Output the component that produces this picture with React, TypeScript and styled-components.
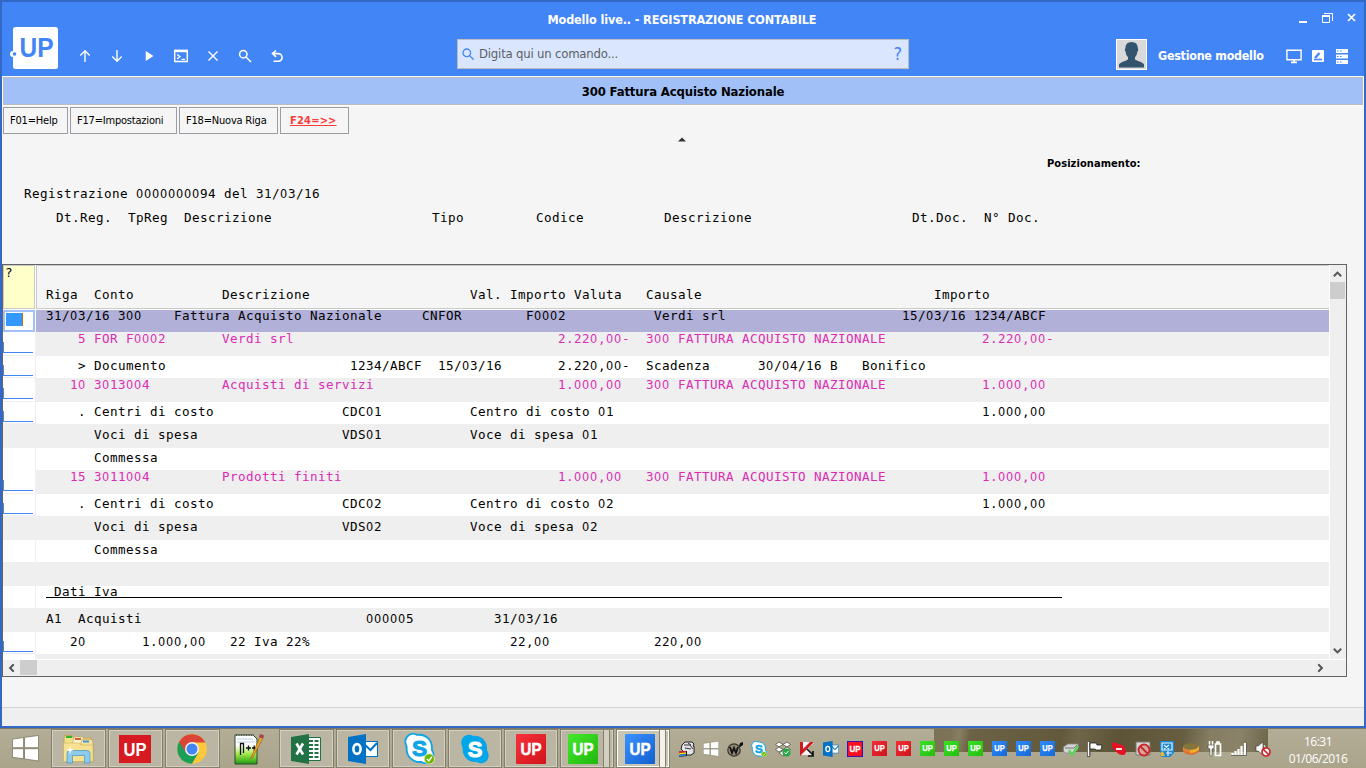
import React from 'react';
import styled, { createGlobalStyle } from 'styled-components';

const UI = `'DejaVu Sans Condensed', 'DejaVu Sans', sans-serif`;

const GlobalStyle = createGlobalStyle`
  * { box-sizing: border-box; }
  body { margin: 0; overflow: hidden; background: #b1ab92; font-family: ${UI}; }
  svg { display: block; }
`;

const Screen = styled.div`
  width: 1366px;
  height: 768px;
  display: flex;
  flex-direction: column;
`;

const Window = styled.main`
  height: 728px;
  border: 2px solid #3368c5;
  background: #f5f5f5;
  display: flex;
  flex-direction: column;
`;

/* ---------- header ---------- */

const Header = styled.header`
  height: 74px;
  flex: none;
  background: #4285f6;
  color: #fff;
`;

const TitleRow = styled.div`
  height: 25px;
  display: grid;
  grid-template-columns: 1fr auto 1fr;
  align-items: end;
`;

const WindowTitle = styled.h1`
  grid-column: 2;
  margin: 0 0 -1px -1px;
  width: 270px;
  font-size: 12.5px;
  font-weight: bold;
  line-height: 16px;
  letter-spacing: -0.12px;
  white-space: nowrap;
`;

const WindowControls = styled.div`
  display: flex;
  justify-content: flex-end;
  gap: 14px;
  padding: 0 8px 3px 0;
`;

const ToolRow = styled.div`
  display: flex;
  height: 49px;
`;

const ToolGroup = styled.div`
  width: 455px;
  display: flex;
  padding-left: 7px;
`;

const Tools = styled.nav`
  display: flex;
  margin: 19px 0 0 8px;
`;

const Tool = styled.span`
  width: 32px;
  height: 20px;
  display: grid;
  place-items: center;
`;

const Search = styled.div`
  width: 452px;
  height: 30px;
  margin-top: 12px;
  padding: 0 6px 0 4px;
  border: 1px solid #bdbdbd;
  background: #dae6fd;
  color: #5b5f66;
  display: flex;
  align-items: center;
  font-size: 13px;
  gap: 5px;
`;

const SearchHint = styled.span`
  flex: 1;
  letter-spacing: -0.2px;
  line-height: 16px;
`;

const HelpMark = styled.span`
  color: #4285f6;
  font: 18px/20px 'DejaVu Sans Condensed', sans-serif;
`;

const UserGroup = styled.div`
  flex: 1;
  display: flex;
  justify-content: flex-end;
  padding: 12px 16px 0 0;
`;

const Avatar = styled.div`
  width: 31px;
  height: 31px;
  border: 1px solid #fff;
`;

const UserName = styled.span`
  width: 128px;
  margin-left: 11px;
  font-size: 12.4px;
  font-weight: bold;
  line-height: 33px;
  letter-spacing: -0.25px;
  white-space: nowrap;
`;

const UserActions = styled.div`
  display: flex;
  align-items: center;
  height: 34px;
  gap: 10px;

  svg:last-child {
    margin-left: 2px;
  }
`;

/* ---------- program heading ---------- */

const ProgramTitle = styled.h2`
  height: 28px;
  flex: none;
  margin: 1px 1px 0;
  border: 1px solid #bdbdbd;
  outline: 1px solid #fafafa;
  background: #a1c0f8;
  color: #000;
  font-size: 13px;
  line-height: 27px;
  letter-spacing: -0.14px;
  text-align: center;
`;

const Commands = styled.div`
  display: flex;
  gap: 2px;
  padding: 2px 0 0 1px;
  height: 29px;
  flex: none;
`;

const Command = styled.button<{ $width: number; $hot?: boolean }>`
  width: ${p => p.$width}px;
  height: 27px;
  padding: 0 0 0 ${p => (p.$hot ? 9 : 6)}px;
  border: 1px solid #9a9da2;
  background: #f5f5f5;
  color: ${p => (p.$hot ? '#fb3c3c' : '#000')};
  font: ${p => (p.$hot ? 'bold' : 'normal')} 11px/24px ${UI};
  text-align: left;
  text-decoration: ${p => (p.$hot ? 'underline' : 'none')};
  letter-spacing: ${p => (p.$hot ? '0.2px' : '-0.2px')};
  white-space: nowrap;
`;

const Collapse = styled.div`
  height: 20px;
  padding: 3px 0 0 676px;
  flex: none;
`;

const Positioning = styled.div`
  height: 29px;
  flex: none;
  padding: 2px 0 0 1045px;
  font-size: 11px;
  font-weight: bold;
  line-height: 16px;
  letter-spacing: 0.07px;
`;

/* ---------- character grid ---------- */

const TextRow = styled.div<{ $base: number }>`
  display: grid;
  grid-template-columns: repeat(155, 8px);
  height: 18px;
  padding-top: ${p => p.$base - 12}px;
  font: 12.58px/16px 'DejaVu Sans Mono', monospace;
  letter-spacing: 0.426px;
  white-space: pre;
`;

const Field = styled.span<{ $col: number }>`
  grid-column: ${p => p.$col + 1};
  grid-row: 1;
  width: 0;
  height: 16px;
`;

/* plain zero, same advance as the other characters */
const Zero = styled.span`
  font-family: 'DejaVu Sans Condensed', sans-serif;
  letter-spacing: 0.8px;
`;

type Cell = [number, string];

const Line = ({ cells, base }: { cells: Cell[]; base: number }) => (
  <TextRow $base={base}>
    {cells.map(([col, text]) => (
      <Field key={col} $col={col}>
        {text.split(/(0+)/).map((part, i) => (i % 2 ? <Zero key={i}>{part}</Zero> : part))}
      </Field>
    ))}
  </TextRow>
);

const Intro = styled.section`
  height: 81px;
  flex: none;
  padding-left: 22px;
`;

const IntroLine = styled.div`
  height: 24px;
`;

/* ---------- table ---------- */

const Table = styled.section`
  width: 1345px;
  height: 413px;
  flex: none;
  border: 1px solid #646464;
  background: #fff;
  display: grid;
  grid-template-columns: 1326px minmax(0, 1fr);
  grid-template-rows: 394px minmax(0, 1fr);
`;

const Body = styled.div`
  overflow: hidden;
`;

const HeadRow = styled.div`
  display: flex;
  gap: 1px;
  height: 45px;
  padding-bottom: 1px;
`;

const HeadMark = styled.div`
  width: 32px;
  border: 1px solid #c9c9c9;
  background: #ffffca;
  padding: 0 0 0 1px;
`;

const MarkLine = styled.div`
  margin-top: -1px;
`;

const HeadText = styled.div`
  flex: 1;
  border: 1px solid #c9c9c9;
  border-right: 0;
  background: #f5f5f5;
  padding: 20px 0 0 9px;
`;

const Row = styled.div<{ $h: number; $bg: string }>`
  display: flex;
  height: ${p => p.$h}px;
  background: ${p => p.$bg};
`;

const Gutter = styled.div<{ $input: boolean; $focus: boolean; $grey: boolean }>`
  width: 33px;
  flex: none;
  border-right: 1px solid ${p => (p.$focus ? '#fff' : '#efefef')};
  border-bottom: ${p => (p.$input && !p.$focus ? '1px solid #efefef' : '0')};
  background: ${p => (p.$grey && !p.$input ? '#efefef' : '#fff')};
  display: flex;
  align-items: flex-end;
`;

const OptionInput = styled.div<{ $low: boolean }>`
  width: 30px;
  height: 11px;
  margin-bottom: ${p => (p.$low ? 1 : 2)}px;
  border: solid #4285f6;
  border-width: 0 0 1px 1px;
`;

const FocusedInput = styled.div`
  width: 32px;
  height: 22px;
  border: 2px solid #a1c0f8;
  padding: 1px;
`;

const Selection = styled.div`
  width: 17px;
  height: 13px;
  background: #3399ff;
  border-right: 1px solid #cc6600;
`;

const Data = styled.div<{ $pink?: boolean; $rule?: boolean }>`
  margin-left: 10px;
  width: 1016px;
  color: ${p => (p.$pink ? '#dc2bb4' : '#000')};
  height: ${p => (p.$rule ? '12px' : 'auto')};
  border-bottom: ${p => (p.$rule ? '1px solid #000' : '0')};
`;

const DataLine = styled.div`
  margin-top: -2px;
`;

const VBar = styled.div`
  margin-left: 1px;
  background: #efefef;
  display: flex;
  flex-direction: column;
  justify-content: space-between;
`;

const HBar = styled.div`
  grid-column: 1 / 3;
  background: #efefef;
  margin-top: 1px;
  padding-right: 17px;
  display: flex;
  justify-content: space-between;
`;

const Arrow = styled.div<{ $turn: number }>`
  width: ${p => (p.$turn % 180 ? 17 : 15)}px;
  height: 16px;
  display: grid;
  place-items: center;
  transform: rotate(${p => p.$turn}deg);
`;

const Thumb = styled.div<{ $w: number; $h: number }>`
  width: ${p => p.$w}px;
  height: ${p => p.$h}px;
  background: #cdcdcd;
`;

const BarStart = styled.div<{ $vertical?: boolean }>`
  display: flex;
  flex-direction: ${p => (p.$vertical ? 'column' : 'row')};
  padding-top: ${p => (p.$vertical ? 1 : 0)}px;
`;

const StatusBar = styled.footer`
  margin-top: auto;
  height: 19px;
  border-top: 1px solid #d3d3d3;
  background: #efefef;
`;

/* ---------- taskbar ---------- */

const Taskbar = styled.div`
  position: relative;
  height: 40px;
  display: flex;
  border-top: 1px solid #7f7a66;
  background: linear-gradient(#b3ad97, #aaa48b);
`;

const Wallpaper = styled.div`
  position: absolute;
  left: 934px;
  top: 0;
  width: 334px;
  height: 23px;
  background: linear-gradient(100deg, #7b7258 0 5%, #877e62 8%, #6c6347 11%, #62593c 38%, #6f6649 43%, #5d5438 55%, #675e41 74%, #857d62 82%, #8b8369 91%, #6d654a 100%);
`;

const Start = styled.div`
  width: 51px;
  flex: none;
  display: grid;
  place-items: center;
`;

const TaskButton = styled.div<{ $plain?: boolean; $active?: boolean; $stack?: boolean; $narrow?: boolean }>`
  width: ${p => (p.$narrow || p.$stack ? 54 : 55)}px;
  flex: none;
  height: 39px;
  margin-right: 2px;
  padding-right: ${p => (p.$stack ? (p.$active ? 6 : 8) : p.$narrow ? 0 : 2)}px;
  border: ${p => (p.$plain ? '1px solid transparent' : '1px solid #85806d')};
  box-shadow: ${p => (p.$plain ? 'none' : `inset 0 0 0 1px ${p.$active ? '#fff' : '#d3cfc0'}`)};
  background: ${p => (p.$plain ? 'none' : p.$active ? '#c9c5b5' : '#bbb6a3')};
  display: grid;
  place-items: center;
  position: relative;
  &::after {
    content: '';
    display: ${p => (p.$stack ? 'block' : 'none')};
    position: absolute;
    right: 3px;
    top: 0;
    width: 5px;
    height: 37px;
    border: solid #85806d;
    border-width: 0 1px;
    background: ${p => (p.$active ? '#f4f2ea' : '#d3cfc0')};
  }
`;

const TaskGroup = styled.div<{ $from: number }>`
  display: flex;
  width: ${p => p.$from}px;
  flex: none;
`;

const Tray = styled.div`
  position: relative;
  display: flex;
  width: 601px;
  margin-left: 3px;
`;

const TrayItem = styled.div`
  width: 24px;
  flex: none;
  display: grid;
  place-items: center;
`;

const Clock = styled.div`
  position: relative;
  width: 84px;
  padding-top: 4px;
  color: #fff;
  text-align: center;
  font: 12px/17px 'Open Sans', sans-serif;
  letter-spacing: -0.5px;
`;

/* ---------- icons ---------- */

const Glyph = ({ d, fill, s = 14, w = 1.6 }: { d: string; fill?: boolean; s?: number; w?: number }) => (
  <svg width={s} height={s} viewBox="0 0 14 14" fill={fill ? '#fff' : 'none'} stroke={fill ? 'none' : '#fff'} strokeWidth={w}>
    <path d={d} />
  </svg>
);

const Tile = ({ size, from, to, edge }: { size: number; from: string; to: string; edge?: string }) => (
  <svg width={size} height={size} viewBox="0 0 30 30">
    <defs>
      <linearGradient id={`t${from.slice(1)}${size}`} x1="0" y1="0" x2="1" y2="1">
        <stop stopColor={from} />
        <stop offset="1" stopColor={to} />
      </linearGradient>
    </defs>
    <rect width="30" height="30" rx="1" fill={`url(#t${from.slice(1)}${size})`} stroke={edge ?? 'none'} strokeWidth={edge ? 3 : 0} />
    <text x="15" y="20.5" textAnchor="middle" fill="#fff" stroke="#fff" strokeWidth=".5" fontFamily="Liberation Sans" fontWeight="bold" fontSize="16.5" textLength="21" lengthAdjust="spacingAndGlyphs">UP</text>
  </svg>
);

const RedTile = () => (
  <svg width="32" height="28" viewBox="0 0 32 28">
    <rect width="32" height="28" fill="#d71a21" />
    <text x="16" y="20.5" textAnchor="middle" fill="#fff" fontFamily="Liberation Sans" fontWeight="bold" fontSize="18" textLength="23" lengthAdjust="spacingAndGlyphs">UP</text>
  </svg>
);

const WindowsLogo = ({ s }: { s: number }) => (
  <svg width={s} height={s} viewBox="0 0 28 28" fill="#fff" stroke="#77735f" strokeWidth=".8">
    <path d="M.5 4.2 12 2.6V13.2H.5zM13 2.4 27.5.5V13.2H13zM.5 14.2H12V24.6L.5 23.2zM13 14.2H27.5V27L13 24.8z" />
  </svg>
);

const SkypeLogo = ({ s, biz, badge }: { s: number; biz?: boolean; badge?: boolean }) => (
  <svg width={s} height={s} viewBox="0 0 30 30">
    <g fill={biz ? '#00a6ea' : '#fff'} stroke="#0fa5e6" strokeWidth={biz ? 0 : 1.8}>
      <path d="M3 3.5C6 .2 10 .2 12.500 1.800 22 .8 28 7.500 27 16.500 29.500 20 29 25 26 27.500 23 29.800 19.500 29.600 17 28 8 29 1.800 22 2.600 13.500.8 10 .8 6.500 3 3.500z" />
    </g>
    <text x="15" y="22.500" textAnchor="middle" fill={biz ? '#fff' : '#0fa5e6'} stroke={biz ? '#fff' : '#0fa5e6'} strokeWidth="1" fontFamily="Liberation Sans" fontWeight="bold" fontSize="22">S</text>
    {badge && (
      <g>
        <circle cx="24.500" cy="25" r="5" fill="#6bb700" stroke="#e8f2d8" strokeWidth=".8" />
        <path d="m22 25 2 2 3-4" fill="none" stroke="#fff" strokeWidth="1.300" />
      </g>
    )}
  </svg>
);

const OutlookLogo = ({ s }: { s: number }) => (
  <svg width={s} height={s} viewBox="0 0 30 30">
    <rect x="16" y="7.500" width="13.500" height="15" fill="#fff" stroke="#0072c6" />
    <path d="m17 11 5.500 5L29 9" fill="none" stroke="#0072c6" strokeWidth="2" />
    <path d="M0 3 18 0V30L0 27z" fill="#0072c6" />
    <ellipse cx="9" cy="15" rx="3.600" ry="4.900" fill="none" stroke="#fff" strokeWidth="2.600" />
  </svg>
);

const ExcelLogo = () => (
  <svg width="30" height="30" viewBox="0 0 30 30">
    <path d="M16 3.500H29.500V26.500H16z" fill="#fff" stroke="#217346" />
    <path d="M18 7h4M18 11h4M18 15h4M18 19h4M18 23h4M23.500 7h4M23.500 11h4M23.500 15h4M23.500 19h4M23.500 23h4" stroke="#217346" strokeWidth="2.200" />
    <path d="M0 3 18 0V30L0 27z" fill="#217346" />
    <path d="m5.500 9.500 6.500 11M12 9.500l-6.500 11" stroke="#fff" strokeWidth="2.600" />
  </svg>
);

const ExplorerLogo = () => (
  <svg width="32" height="30" viewBox="0 0 32 30">
    <path d="M2 4 3 1.500h7L11.500 4H29l1 2v21H2z" fill="#f3df8c" stroke="#b99a43" strokeWidth=".8" />
    <path d="M4 2h6v2H4z" fill="#2fb52f" />
    <path d="M11 6 12 3h9l1 3v4H11z" fill="#fbf2cc" stroke="#c6a64d" strokeWidth=".6" />
    <path d="M13 4h6v2h-6z" fill="#d85b3c" />
    <path d="M19 9 20 5.500h10L31 9v18H19z" fill="#f5e29a" stroke="#bf9e46" strokeWidth=".6" />
    <path d="M21 6.500h6v2h-6z" fill="#3f97dc" />
    <path d="M1.500 9H17l2 2h12v16.500H1.500z" fill="#f6e190" stroke="#c6a64d" strokeWidth=".5" />
    <path d="M5 29V19.500Q5 16.500 8 16.500H25Q28 16.500 28 19.500V29H22.500V21.500H10.500V29z" fill="#8dcbe9" stroke="#4f9cc6" strokeWidth=".8" />
    <path d="M8 11.500 8.800 15l3.200 1-3.200 1L8 20.500 7.200 17 4 16l3.200-1z" fill="#fff" />
  </svg>
);

const ChromeLogo = () => (
  <svg width="30" height="30" viewBox="0 0 30 30">
    <circle cx="15" cy="15" r="14.800" fill="#fdc93b" />
    <path d="M15 15 2.200 7.600A14.800 14.800 0 0 0 15 29.800L21.500 18.600z" fill="#1a9f59" />
    <path d="M2.200 7.600A14.800 14.800 0 0 1 28.300 8.500H15L8.500 18.600z" fill="#dc4437" />
    <circle cx="15" cy="15" r="7" fill="#f3f3f3" />
    <circle cx="15" cy="15" r="5.500" fill="#4285f4" />
  </svg>
);

const NotepadLogo = () => (
  <svg width="32" height="32" viewBox="0 0 32 32">
    <defs>
      <linearGradient id="npp" x1="0" y1="0" x2="0" y2="1">
        <stop offset=".35" stopColor="#fff" />
        <stop offset=".65" stopColor="#a6e64c" />
        <stop offset="1" stopColor="#1d9d12" />
      </linearGradient>
    </defs>
    <path d="M2 2h18l4 4v25H2z" fill="url(#npp)" stroke="#2b4a2b" />
    <path d="M3 2h18" stroke="#555" strokeWidth="2" strokeDasharray="1 1.500" />
    <path d="M4 6h16M4 9h18" stroke="#b9cde6" />
    <path d="M7.500 22V10.500h3V20M13 15h5M15.500 12.500v5M19 15h4.500M21.200 12.500v5" stroke="#111" strokeWidth="1.300" fill="none" />
    <path d="M17.500 26 27 4l2.800 1.300L20 24z" fill="#f3a727" stroke="#8a5a12" strokeWidth=".6" />
    <path d="m26 4 1.200-3 4 1.500L30 5.500z" fill="#a8434b" />
  </svg>
);

const Small = ({ children }: { children: React.ReactNode }) => (
  <svg width="16" height="16" viewBox="0 0 16 16">{children}</svg>
);

const trayIcons: React.ReactNode[] = [
  <Small>
    <path d="M3 4 6 1h7l2 2-1 2h1v7l-3 2H8L2 8z" fill="#e2e2e8" stroke="#222" />
    <path d="M5 4h6l3 4M6 7l6 1M9 2l3 2" stroke="#333" fill="none" />
    <path d="m0 10.500 8-.500v5l-8 1z" fill="#222" />
    <path d="m0 11.500 7-1" stroke="#e42222" strokeWidth="1.600" />
    <path d="m0 13 7-1" stroke="#f0e32c" strokeWidth="1.400" />
    <path d="m0 14.700 7-1" stroke="#2c8ce8" strokeWidth="1.600" />
  </Small>,
  <WindowsLogo s={16} />,
  <Small>
    <circle cx="7" cy="9" r="6.200" fill="#8f8a78" stroke="#38362e" strokeWidth="1.200" />
    <path d="m3 6 2 6 2-5 2 5 2-6" fill="none" stroke="#111" strokeWidth="1.800" />
    <path d="m12 5 1-3 3-1v3l-3 2z" fill="#111" />
  </Small>,
  <SkypeLogo s={16} badge />,
  <Small>
    <path d="m4 1 4 2.500L4 6 .5 3.500zM12 1 8 3.500 12 6l3.500-2.500zM4 6 8 8.500 4 11 .5 8.500zM12 6 8 8.500l4 2.500 3.500-2.500zM4 12l4-2.500 4 2.500-4 3z" fill="#fff" stroke="#54534b" strokeWidth=".8" />
    <circle cx="11.500" cy="11.500" r="4" fill="#28a745" />
    <path d="m9.500 11.500 1.500 1.500 2.500-3" stroke="#fff" fill="none" />
  </Small>,
  <Small>
    <path d="M1 1h14v1L9 7l5 7H1z" fill="#f4f4f4" />
    <path d="M1 1h3v7l7-7h4L5 11l-4 4z" fill="#cf1920" />
    <path d="m8 8 6 6m0-4v5H9" stroke="#111" strokeWidth="1.700" fill="none" />
  </Small>,
  <OutlookLogo s={16} />,
  <Tile size={16} from="#ff1020" to="#f01020" edge="#1010e0" />,
  <Tile size={15} from="#f52c34" to="#d0141c" />,
  <Tile size={15} from="#f52c34" to="#d0141c" />,
  <Tile size={15} from="#3ae222" to="#23bd10" />,
  <Tile size={15} from="#3ae222" to="#23bd10" />,
  <Tile size={15} from="#3ae222" to="#23bd10" />,
  <Tile size={15} from="#2f8dfb" to="#1467d6" />,
  <Tile size={15} from="#2f8dfb" to="#1467d6" />,
  <Tile size={15} from="#2f8dfb" to="#1467d6" />,
  <Small>
    <path d="M.5 6 5 3h10v5l-4 4H2L.5 10z" fill="#d5d5d5" stroke="#888" strokeWidth=".8" />
    <path d="M2 7h9l3-3" stroke="#777" fill="none" />
    <path d="m6 9 3 5 6-9" fill="none" stroke="#5bd35b" strokeWidth="2.400" />
  </Small>,
  <Small>
    <path d="M1.500 1v14.500" stroke="#111" strokeWidth="3.500" />
    <path d="M1.500 1v14" stroke="#fff" strokeWidth="1.800" />
    <path d="M3 2h6l1 2h5l-1 5H9L8 8H3z" fill="#fff" stroke="#222" strokeWidth=".8" />
  </Small>,
  <Small>
    <path d="M1 2Q4 .5 7 3q7 0 8 7 0 4-3 4-5 0-7-4Q0 7 1 2z" fill="#e81123" />
    <path d="M5 8h6" stroke="#fff" strokeWidth="1.800" />
  </Small>,
  <Small>
    <path d="M1 1h14v13H1z" fill="#d8d8d8" stroke="#777" />
    <circle cx="9" cy="9" r="5.500" fill="#d9a5a0" stroke="#c92a2a" strokeWidth="2" />
    <path d="m5 5 8 8" stroke="#c92a2a" strokeWidth="2" />
  </Small>,
  <Small>
    <path d="M1 0h14v12l-4 4H3l-2-2z" fill="#1b86d1" />
    <path d="M3 2h10v7H3zM5 4l5 4M10 4 5 8M7 12h6M9 10v5" fill="none" stroke="#e9f4fc" strokeWidth="1.200" />
    <path d="m1 12 3-2 2 5H2z" fill="#e5b93c" />
  </Small>,
  <Small>
    <ellipse cx="8" cy="9.500" rx="8" ry="4.200" fill="#dc7130" />
    <path d="M0 6v3.500q8 4 16 0V5z" fill="#e08334" />
    <ellipse cx="8" cy="5.500" rx="8" ry="3.200" fill="#85753a" />
    <path d="M7 9q7 0 9-4v3q-3 4-9 4z" fill="#efb02f" />
  </Small>,
  <Small>
    <path d="M2.500 0v4M5.500 0v4" stroke="#fff" strokeWidth="1.500" />
    <path d="M1 4h6v3L5 8v7H3V8L1 7z" fill="#fff" stroke="#333" strokeWidth=".5" />
    <path d="M8.500 3h5v11.500h-5zM10 1h2v2h-2z" fill="none" stroke="#fff" strokeWidth="1.700" />
  </Small>,
  <Small>
    <path d="M1.500 14v-2M4.500 14v-4M7.500 14V8M10.500 14V5M14 14V2" stroke="#fff" strokeWidth="2.200" />
    <path d="M0 14.500h15.500V1.500" fill="none" stroke="#444" strokeWidth=".6" />
  </Small>,
  <Small>
    <path d="M1 5h2l5-4v13l-5-4H1z" fill="#fff" stroke="#333" strokeWidth=".6" />
    <path d="M9 4q2 2 1 5" fill="none" stroke="#fff" />
    <circle cx="11" cy="11" r="4" fill="#fff" stroke="#d2232a" strokeWidth="1.700" />
    <path d="m8 8 6 6" stroke="#d2232a" strokeWidth="1.700" />
  </Small>,
];

const ScrollArrow = ({ turn }: { turn: number }) => (
  <Arrow $turn={turn}>
    <svg width="9" height="6" viewBox="0 0 9 6"><path d="M.8 5.300 4.500 1.600 8.200 5.300" fill="none" stroke="#565656" strokeWidth="2" /></svg>
  </Arrow>
);

/* ---------- data ---------- */

interface Entry {
  cells: Cell[];
  h: number;
  base: number;
  input?: boolean;
  pink?: boolean;
  focus?: boolean;
  rule?: boolean;
}

const entries: Entry[] = [
  { h: 22, base: 10, input: true, focus: true, cells: [[0, '31/03/16'], [9, '300'], [16, 'Fattura Acquisto Nazionale'], [47, 'CNFOR'], [60, 'F0002'], [76, 'Verdi srl'], [107, '15/03/16'], [116, '1234/ABCF']] },
  { h: 24, base: 11, input: true, pink: true, cells: [[4, '5'], [6, 'FOR F0002'], [22, 'Verdi srl'], [64, '2.220,00-'], [75, '300 FATTURA ACQUISTO NAZIONALE'], [117, '2.220,00-']] },
  { h: 22, base: 14, input: true, cells: [[4, '>'], [6, 'Documento'], [38, '1234/ABCF'], [49, '15/03/16'], [64, '2.220,00-'], [75, 'Scadenza'], [89, '30/04/16'], [98, 'B'], [102, 'Bonifico']] },
  { h: 24, base: 11, input: true, pink: true, cells: [[3, '10'], [6, '3013004'], [22, 'Acquisti di servizi'], [64, '1.000,00'], [75, '300 FATTURA ACQUISTO NAZIONALE'], [117, '1.000,00']] },
  { h: 22, base: 14, input: true, cells: [[4, '.'], [6, 'Centri di costo'], [37, 'CDC01'], [53, 'Centro di costo 01'], [117, '1.000,00']] },
  { h: 24, base: 15, cells: [[6, 'Voci di spesa'], [37, 'VDS01'], [53, 'Voce di spesa 01']] },
  { h: 22, base: 14, cells: [[6, 'Commessa']] },
  { h: 24, base: 11, input: true, pink: true, cells: [[3, '15'], [6, '3011004'], [22, 'Prodotti finiti'], [64, '1.000,00'], [75, '300 FATTURA ACQUISTO NAZIONALE'], [117, '1.000,00']] },
  { h: 22, base: 14, input: true, cells: [[4, '.'], [6, 'Centri di costo'], [37, 'CDC02'], [53, 'Centro di costo 02'], [117, '1.000,00']] },
  { h: 24, base: 15, cells: [[6, 'Voci di spesa'], [37, 'VDS02'], [53, 'Voce di spesa 02']] },
  { h: 22, base: 14, cells: [[6, 'Commessa']] },
  { h: 24, base: 14, cells: [] },
  { h: 22, base: 10, rule: true, cells: [[1, 'Dati Iva']] },
  { h: 24, base: 15, cells: [[0, 'A1'], [4, 'Acquisti'], [40, '000005'], [56, '31/03/16']] },
  { h: 22, base: 14, input: true, cells: [[3, '20'], [12, '1.000,00'], [23, '22 Iva 22%'], [58, '22,00'], [76, '220,00']] },
  { h: 24, base: 14, input: true, cells: [] },
];

const rowColor = (e: Entry, i: number) => (e.focus ? '#b1b0d8' : i % 2 ? '#efefef' : '#fff');

const TableRow = ({ entry, index }: { entry: Entry; index: number }) => (
  <Row $h={entry.h} $bg={rowColor(entry, index)}>
    <Gutter $input={!!entry.input} $focus={!!entry.focus} $grey={index % 2 === 1}>
      {entry.focus ? <FocusedInput><Selection /></FocusedInput> : entry.input && <OptionInput $low={index % 2 === 0} />}
    </Gutter>
    <Data $pink={entry.pink} $rule={entry.rule}>
      <DataLine><Line base={entry.base + 2} cells={entry.cells} /></DataLine>
    </Data>
  </Row>
);

export default function App() {
  return (
    <Screen>
      <GlobalStyle />
      <Window>
        <Header>
          <TitleRow>
            <WindowTitle>Modello live.. - REGISTRAZIONE CONTABILE</WindowTitle>
            <WindowControls>
              <svg width="10" height="11" viewBox="0 0 10 11"><path d="M1 8h8v2H1z" fill="#fff" /></svg>
              <svg width="11" height="11" viewBox="0 0 11 11" fill="none" stroke="#fff"><path d="M2 .5h8.500V8M.5 9.500v-7h7v7z" /><path d="M0 3h8" strokeWidth="2" /></svg>
              <svg width="9" height="11" viewBox="0 0 9 11"><path d="m1 1 7 7M8 1 1 8" stroke="#fff" strokeWidth="1.700" /></svg>
            </WindowControls>
          </TitleRow>
          <ToolRow>
            <ToolGroup>
              <svg width="52" height="43" viewBox="0 0 52 43">
                <rect x="4" y="0" width="45" height="42" rx="2.500" fill="#fff" />
                <circle cx="4" cy="27" r="3" fill="#fff" />
                <circle cx="5.500" cy="27" r="1.800" fill="#4285f6" />
                <text x="10.500" y="30" fill="#4285f6" fontFamily="Liberation Sans" fontWeight="bold" fontSize="27" textLength="34" lengthAdjust="spacingAndGlyphs">UP</text>
              </svg>
              <Tools>
                <Tool><Glyph d="M7 13V2M2.300 6.500 7 1.800l4.700 4.700" w={1.4} /></Tool>
                <Tool><Glyph d="M7 1v11M2.300 7.500 7 12.200l4.700-4.700" w={1.4} /></Tool>
                <Tool><Glyph fill d="M3.700 2 11.500 7l-7.800 5z" /></Tool>
                <Tool>
                  <svg width="14" height="14" viewBox="0 0 14 14" fill="none" stroke="#fff"><path d="M.7 1.500h12.600v11H.7z" strokeWidth="1.400" /><path d="M0 2h14" strokeWidth="2.400" /><path d="m3 5.500 3 2-3 2.500M7.500 10.300H11" strokeWidth="1.300" /></svg>
                </Tool>
                <Tool><Glyph d="m2.500 2.500 9 9M11.500 2.500l-9 9" w={1.4} /></Tool>
                <Tool><Glyph d="M5.300 1.500a3.700 3.700 0 1 1 0 7.400 3.700 3.700 0 0 1 0-7.400M8 8l5 5" w={1.5} /></Tool>
                <Tool><Glyph d="M6 1.500 2.500 4.600 6 7.800M3 4.600h5.300a3.700 3.700 0 0 1 0 7.600H3.500" /></Tool>
              </Tools>
            </ToolGroup>
            <Search>
              <svg width="12" height="12" viewBox="0 0 12 12" fill="none" stroke="#4285f6" strokeWidth="1.300"><circle cx="4.800" cy="4.800" r="3.800" /><path d="m7.600 7.600 4 4" /></svg>
              <SearchHint>Digita qui un comando...</SearchHint>
              <HelpMark>?</HelpMark>
            </Search>
            <UserGroup>
              <Avatar>
                <svg width="29" height="29" viewBox="0 0 29 29">
                  <rect width="29" height="29" fill="#d9d9d9" />
                  <path d="M2 27.500V24.500Q3 22.500 8 21l3-1.500v-2.300Q8.800 15 8.500 11.500 7 10 8.400 8 8.500 2 14.500 2q6.200 0 6.300 6 1.200 2-.3 3.500-.4 3.500-2.500 5.700v2.300L21 21q5 1.500 6 3.500v3z" fill="#34536d" />
                </svg>
              </Avatar>
              <UserName>Gestione modello</UserName>
              <UserActions>
                <svg width="16" height="15" viewBox="0 0 16 15" fill="none" stroke="#fff" strokeWidth="1.400"><path d="M.9 1.200h14.200v9.500H.9z" /><path d="M5 13.300h6M8 10.500v2.800" strokeWidth="1.800" /></svg>
                <svg width="12" height="12" viewBox="0 0 12 12"><rect width="12" height="12" rx="1" fill="#fff" /><path d="M2 9.500h8" stroke="#4285f6" strokeWidth="1.600" /><path d="m3 8 4.500-5" stroke="#4285f6" strokeWidth="2.400" /></svg>
                <svg width="12" height="15" viewBox="0 0 12 15"><path d="M0 0h12v4H0zM0 5.500h12v4H0zM0 11h12v4H0z" fill="#fff" /><path d="M1 2h1.500M4 2h1.500M1 7.500h1.500M4 7.500h1.500M1 13h1.500M4 13h1.500" stroke="#4285f6" /></svg>
              </UserActions>
            </UserGroup>
          </ToolRow>
        </Header>
        <ProgramTitle>300 Fattura Acquisto Nazionale</ProgramTitle>
        <Commands>
          <Command $width={65}>F01=Help</Command>
          <Command $width={107}>F17=Impostazioni</Command>
          <Command $width={99}>F18=Nuova Riga</Command>
          <Command $width={69} $hot>F24=&gt;&gt;</Command>
        </Commands>
        <Collapse>
          <svg width="8" height="5" viewBox="0 0 8 5"><path d="M0 4.500 4 .5 8 4.500z" fill="#333" /></svg>
        </Collapse>
        <Positioning>Posizionamento:</Positioning>
        <Intro>
          <IntroLine><Line base={15} cells={[[0, 'Registrazione'], [14, '0000000094'], [25, 'del'], [29, '31/03/16']]} /></IntroLine>
          <IntroLine><Line base={15} cells={[[4, 'Dt.Reg.'], [13, 'TpReg'], [20, 'Descrizione'], [51, 'Tipo'], [64, 'Codice'], [80, 'Descrizione'], [111, 'Dt.Doc.'], [120, 'N° Doc.']]} /></IntroLine>
        </Intro>
        <Table>
          <Body>
            <HeadRow>
              <HeadMark><MarkLine><Line base={12} cells={[[0, '?']]} /></MarkLine></HeadMark>
              <HeadText>
                <Line base={13} cells={[[0, 'Riga'], [6, 'Conto'], [22, 'Descrizione'], [53, 'Val.'], [58, 'Importo Valuta'], [75, 'Causale'], [111, 'Importo']]} />
              </HeadText>
            </HeadRow>
            {entries.map((entry, i) => <TableRow key={i} entry={entry} index={i} />)}
          </Body>
          <VBar>
            <BarStart $vertical><ScrollArrow turn={0} /><Thumb $w={15} $h={17} /></BarStart>
            <ScrollArrow turn={180} />
          </VBar>
          <HBar>
            <BarStart><ScrollArrow turn={-90} /><Thumb $w={17} $h={15} /></BarStart>
            <ScrollArrow turn={90} />
          </HBar>
        </Table>
        <StatusBar />
      </Window>
      <Taskbar>
        <Wallpaper />
        <TaskGroup $from={672}>
          <Start><WindowsLogo s={27} /></Start>
          <TaskButton><ExplorerLogo /></TaskButton>
          <TaskButton><RedTile /></TaskButton>
          <TaskButton><ChromeLogo /></TaskButton>
          <TaskButton $plain><NotepadLogo /></TaskButton>
          <TaskButton><ExcelLogo /></TaskButton>
          <TaskButton $narrow><OutlookLogo s={30} /></TaskButton>
          <TaskButton $narrow><SkypeLogo s={31} badge /></TaskButton>
          <TaskButton $narrow><SkypeLogo s={30} biz /></TaskButton>
          <TaskButton $narrow><Tile size={30} from="#f8323a" to="#d0141c" /></TaskButton>
          <TaskButton $stack><Tile size={30} from="#44e82c" to="#1fb80e" /></TaskButton>
          <TaskButton $stack $active><Tile size={30} from="#3a92ff" to="#1260cf" /></TaskButton>
        </TaskGroup>
        <Tray>{trayIcons.map((icon, i) => <TrayItem key={i}>{icon}</TrayItem>)}</Tray>
        <Clock>16:31<br />01/06/2016</Clock>
      </Taskbar>
    </Screen>
  );
}
